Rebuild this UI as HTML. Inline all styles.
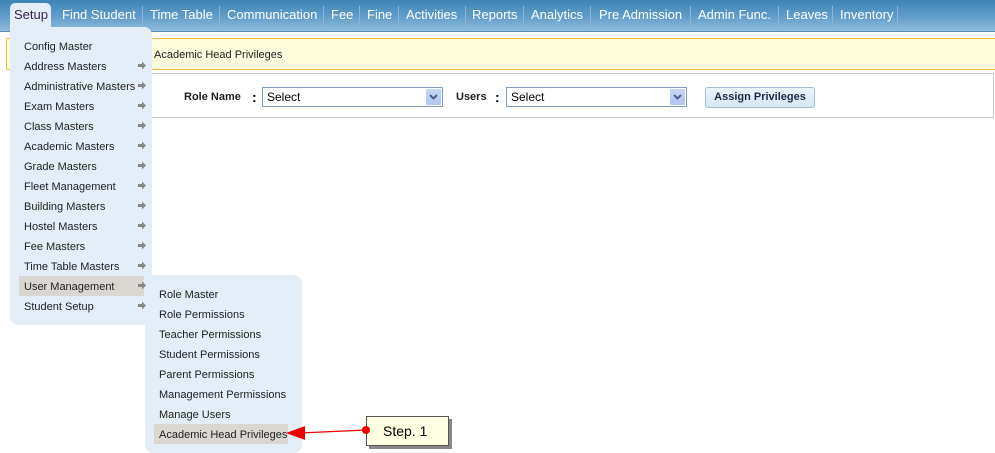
<!DOCTYPE html>
<html><head><style>
body{margin:0;width:995px;height:453px;background:#fff;font-family:"Liberation Sans",Arial,sans-serif;position:relative;overflow:hidden}
.nav{position:absolute;left:0;top:0;width:995px;height:31px;background:linear-gradient(#3f84b5,#5e9bc8 50%,#8fbbdd);border-bottom:1px solid #5a8fb8}
.nav span{position:absolute;top:7px;color:#fff;font-size:13px;white-space:nowrap}
.sep{position:absolute;top:6px;width:1px;height:20px;background:#8fb6d6}
.tab{position:absolute;left:10px;top:3px;width:41px;height:30px;background:#e3eef8;border-radius:5px 5px 0 0}
.yb{position:absolute;left:6px;top:38px;width:995px;height:30px;background:#fcfbdc;border-top:1px solid #f5c040;border-bottom:1px solid #f5c040;border-left:1px solid #f5c040}
.cb{position:absolute;left:100px;top:73px;width:892px;height:43px;border:1px solid #c8c8c8}
.menu{position:absolute;background:#e3eef8}
.mi{position:absolute;font-size:11px;color:#222;white-space:nowrap}
.ar{position:absolute;width:9px;height:9px}
.sel{position:absolute;height:18px;border:1px solid #7f9db9;background:#fff;font-size:12px}
.sel i{position:absolute;right:1px;top:1px;width:15px;height:16px;background:linear-gradient(#c6d6f7,#b1c6f0)}
</style></head><body>
<div class="nav">
<span style="left:62px">Find Student</span><div class="sep" style="left:142px"></div>
<span style="left:150px">Time Table</span><div class="sep" style="left:219px"></div>
<span style="left:227px">Communication</span><div class="sep" style="left:323px"></div>
<span style="left:331px">Fee</span><div class="sep" style="left:359px"></div>
<span style="left:367px">Fine</span><div class="sep" style="left:398px"></div>
<span style="left:406px">Activities</span><div class="sep" style="left:465px"></div>
<span style="left:472px">Reports</span><div class="sep" style="left:523px"></div>
<span style="left:531px">Analytics</span><div class="sep" style="left:590px"></div>
<span style="left:599px">Pre Admission</span><div class="sep" style="left:690px"></div>
<span style="left:698px">Admin Func.</span><div class="sep" style="left:778px"></div>
<span style="left:786px">Leaves</span><div class="sep" style="left:832px"></div>
<span style="left:840px">Inventory</span><div class="sep" style="left:897px"></div>
</div>
<div class="tab"></div>
<span style="position:absolute;left:14px;top:7px;font-size:13px;color:#3a2050">Setup</span>
<div class="yb"><span style="position:absolute;left:147px;top:10px;font-size:11px;color:#222">Academic Head Privileges</span></div>
<div class="cb"></div>
<span style="position:absolute;left:184px;top:91px;font-size:11px;font-weight:bold;color:#222">Role Name</span>
<span style="position:absolute;left:252px;top:89px;font-size:14px;font-weight:bold">:</span>
<div class="sel" style="left:262px;top:87px;width:179px"><span style="position:absolute;left:4px;top:2px">Select</span><i><svg width="15" height="16"><path d="M4 6l3.5 3.5L11 6" stroke="#4d6185" stroke-width="2" fill="none"/></svg></i></div>
<span style="position:absolute;left:456px;top:91px;font-size:11px;font-weight:bold;color:#222">Users</span>
<span style="position:absolute;left:495px;top:89px;font-size:14px;font-weight:bold">:</span>
<div class="sel" style="left:506px;top:87px;width:179px"><span style="position:absolute;left:4px;top:2px">Select</span><i><svg width="15" height="16"><path d="M4 6l3.5 3.5L11 6" stroke="#4d6185" stroke-width="2" fill="none"/></svg></i></div>
<div style="position:absolute;left:705px;top:87px;width:108px;height:19px;border:1px solid #9fbdd6;border-radius:3px;background:linear-gradient(#eaf4fc,#d5e7f6);font-size:11px;font-weight:bold;color:#1c2a4a;text-align:center;line-height:19px">Assign Privileges</div>
<div class="menu" style="left:10px;top:27px;width:142px;height:298px;border-radius:0 8px 8px 8px"></div>
<div style="position:absolute;left:19px;top:276px;width:125px;height:20px;background:#dad7d2"></div>
<div class="menu" style="left:145px;top:275px;width:157px;height:178px;border-radius:8px"></div>
<div style="position:absolute;left:154px;top:424px;width:134px;height:20px;background:#dad7d2"></div>
<div class="mi" style="left:24px;top:41px">Config Master</div>
<div class="mi" style="left:24px;top:61px">Address Masters</div>
<div class="mi" style="left:24px;top:81px">Administrative Masters</div>
<div class="mi" style="left:24px;top:101px">Exam Masters</div>
<div class="mi" style="left:24px;top:121px">Class Masters</div>
<div class="mi" style="left:24px;top:141px">Academic Masters</div>
<div class="mi" style="left:24px;top:161px">Grade Masters</div>
<div class="mi" style="left:24px;top:181px">Fleet Management</div>
<div class="mi" style="left:24px;top:201px">Building Masters</div>
<div class="mi" style="left:24px;top:221px">Hostel Masters</div>
<div class="mi" style="left:24px;top:241px">Fee Masters</div>
<div class="mi" style="left:24px;top:261px">Time Table Masters</div>
<div class="mi" style="left:24px;top:281px">User Management</div>
<div class="mi" style="left:24px;top:301px">Student Setup</div>
<svg style="position:absolute;left:0;top:0" width="995" height="453">
<g fill="#888">
<path id="a" d="M138 64h4v-2.5l4 4-4 4v-2.5h-4z"/>
<use href="#a" y="20"/><use href="#a" y="40"/><use href="#a" y="60"/><use href="#a" y="80"/><use href="#a" y="100"/><use href="#a" y="120"/><use href="#a" y="140"/><use href="#a" y="160"/><use href="#a" y="180"/><use href="#a" y="200"/><use href="#a" y="220"/><use href="#a" y="240"/>
</g></svg>
<div class="mi" style="left:159px;top:289px">Role Master</div>
<div class="mi" style="left:159px;top:309px">Role Permissions</div>
<div class="mi" style="left:159px;top:329px">Teacher Permissions</div>
<div class="mi" style="left:159px;top:349px">Student Permissions</div>
<div class="mi" style="left:159px;top:369px">Parent Permissions</div>
<div class="mi" style="left:159px;top:389px">Management Permissions</div>
<div class="mi" style="left:159px;top:409px">Manage Users</div>
<div class="mi" style="left:159px;top:429px">Academic Head Privileges</div>
<div style="position:absolute;left:369px;top:419px;width:83px;height:30px;background:#888"></div>
<div style="position:absolute;left:366px;top:416px;width:81px;height:28px;background:#ffffe1;border:1px solid #555;font-size:14px;line-height:28px"><span style="margin-left:16px">Step. 1</span></div>
<svg style="position:absolute;left:0;top:0" width="995" height="453"><line x1="300" y1="433" x2="366" y2="430" stroke="#e00" stroke-width="1.2"/><polygon points="286,433 305,426 305,440" fill="#e00"/><circle cx="366" cy="430" r="4" fill="#e00"/></svg>
</body></html>
